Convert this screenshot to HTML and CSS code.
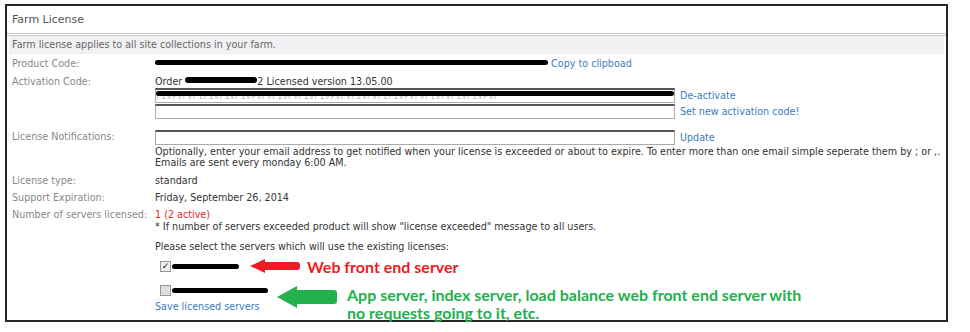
FILE: index.html
```html
<!DOCTYPE html>
<html lang="en">
<head>
    <meta charset="UTF-8">
    <title>Farm License</title>
    <link rel="stylesheet" href="styles.css">
</head>
<body>
    <div class="frame">
        <div class="title">Farm License</div>
        <div class="intro">Farm license applies to all site collections in your farm.</div>

        <div class="rows">
            <div class="label">Product Code:</div>
            <div class="value">
                <span class="blob blob-code"></span>
                <a href="#" class="link">Copy to clipboad</a>
            </div>

            <div class="label label-act">Activation Code:</div>
            <div class="value value-act">
                <div class="line">Order <span class="blob blob-order"></span>2 Licensed version 13.05.00</div>
                <div class="field-row">
                    <div class="box box-filled"><span class="faint">F1vPvFvF1F1vF1vF1vPvFvF1vFvF1vF1vPvFvF1vFvF1F1vPvFvF1vFvF1vF1vPvF</span><span class="blob blob-key"></span></div>
                    <a href="#" class="link">De-activate</a>
                </div>
                <div class="field-row">
                    <div class="box"></div>
                    <a href="#" class="link">Set new activation code!</a>
                </div>
            </div>

            <div class="label label-notify">License Notifications:</div>
            <div class="value value-notify">
                <div class="field-row">
                    <div class="box"></div>
                    <a href="#" class="link">Update</a>
                </div>
                <div class="help">Optionally, enter your email address to get notified when your license is exceeded or about to expire. To enter more than one email simple seperate them by ; or ,.<br>Emails are sent every monday 6:00 AM.</div>
            </div>

            <div class="label label-type">License type:</div>
            <div class="value value-type">standard</div>

            <div class="label">Support Expiration:</div>
            <div class="value">Friday, September 26, 2014</div>

            <div class="label">Number of servers licensed:</div>
            <div class="value">
                <div class="count">1 (2 active)</div>
                <div>* If number of servers exceeded product will show "license exceeded" message to all users.</div>
                <div class="select-note">Please select the servers which will use the existing licenses:</div>
                <div class="server server-first"><span class="check checked">&#10003;</span><span class="blob blob-srv1"></span></div>
                <div class="server server-second"><span class="check"></span><span class="blob blob-srv2"></span></div>
                <a href="#" class="link save">Save licensed servers</a>
            </div>
        </div>

        <div class="note note-red">
            <svg width="50" height="14" viewBox="0 0 50 14"><path d="M0 7 L15 0 L15 3 L47 3 Q50 3 50 6 L50 8 Q50 11 47 11 L15 11 L15 14 Z" fill="#ed1c24"/></svg>
            <span>Web front end server</span>
        </div>
        <div class="note note-green">
            <svg width="60" height="22" viewBox="0 0 60 22"><path d="M0 11 L20 0 L20 4 L57 4 Q60 4 60 7 L60 15 Q60 18 57 18 L20 18 L20 22 Z" fill="#22b14c"/></svg>
            <span>App server, index server, load balance web front end server with<br>no requests going to it, etc.</span>
        </div>
    </div>
</body>
</html>
```

FILE: styles.css
```css
body {
    margin: 0;
    background: #fff;
    font-family: "DejaVu Sans", Verdana, sans-serif;
    font-size: 9.6px;
    color: #333;
}

.frame {
    position: relative;
    margin: 4px 0 0 5px;
    width: 939px;
    height: 314px;
    border: 2px solid #262626;
}

.title {
    height: 27px;
    line-height: 27px;
    padding-left: 5px;
    font-size: 11px;
    color: #555;
    border-bottom: 3px double #c8c8c8;
}

.intro {
    background: #f1f1f4;
    margin: 0 2px;
    padding: 3px 3px;
    line-height: 12px;
    color: #666;
}

.rows {
    display: grid;
    grid-template-columns: 143px 1fr;
    row-gap: 5px;
    padding: 4px 0 0 5px;
    line-height: 12px;
}

.label {
    color: #888;
}

.value {
    color: #333;
}

.link {
    color: #3a7cc0;
    text-decoration: none;
}

.blob {
    display: inline-block;
    background: #000;
    height: 5px;
    border-radius: 3px;
    vertical-align: 2px;
}

.blob-code { width: 393px; }
.blob-order { width: 72px; height: 6px; }
.blob-key { position: absolute; left: 0; top: 1px; width: 518px; height: 5px; }
.blob-srv1 { width: 67px; }
.blob-srv2 { width: 96px; }

.label-act,
.value-act {
    margin-top: 1px;
}

.field-row {
    display: flex;
    align-items: center;
    gap: 5px;
    margin-bottom: 1px;
}

.box {
    position: relative;
    width: 518px;
    height: 12px;
    border: 1px solid #aaa;
    border-top: 2px solid #555;
    background: #fff;
    overflow: hidden;
}

.faint {
    display: block;
    color: #bbb;
    font-size: 8px;
    line-height: 14px;
    white-space: nowrap;
    letter-spacing: 0.5px;
}

.label-notify {
    margin-top: 6px;
}

.value-notify {
    margin-top: 5px;
}

.help {
    margin-top: 1px;
    line-height: 11px;
}

.label-type,
.value-type {
    margin-top: 2px;
}

.count {
    color: #e02828;
}

.select-note {
    margin-top: 8px;
}

.server {
    display: flex;
    align-items: center;
    gap: 1px;
    height: 14px;
    padding-left: 5px;
}

.server-first {
    margin-top: 6px;
}

.server-second {
    margin-top: 10px;
}

.check {
    display: inline-block;
    width: 9px;
    height: 9px;
    border: 1px solid #999;
    background: #ddd;
    font-size: 9px;
    line-height: 9px;
    color: #222;
    text-align: center;
}

.check.checked {
    background: #eee;
}

.save {
    display: inline-block;
    margin-top: 4px;
}

.note {
    position: absolute;
    display: flex;
    align-items: flex-start;
    font-family: Lato, "Open Sans", sans-serif;
    font-weight: bold;
    font-size: 16px;
    line-height: 18px;
}

.note-red {
    left: 243px;
    top: 252px;
    gap: 7px;
    color: #ed1c24;
}

.note-red svg {
    margin-top: 1px;
}

.note-green {
    left: 270px;
    top: 280px;
    gap: 10px;
    color: #22b14c;
}
```
